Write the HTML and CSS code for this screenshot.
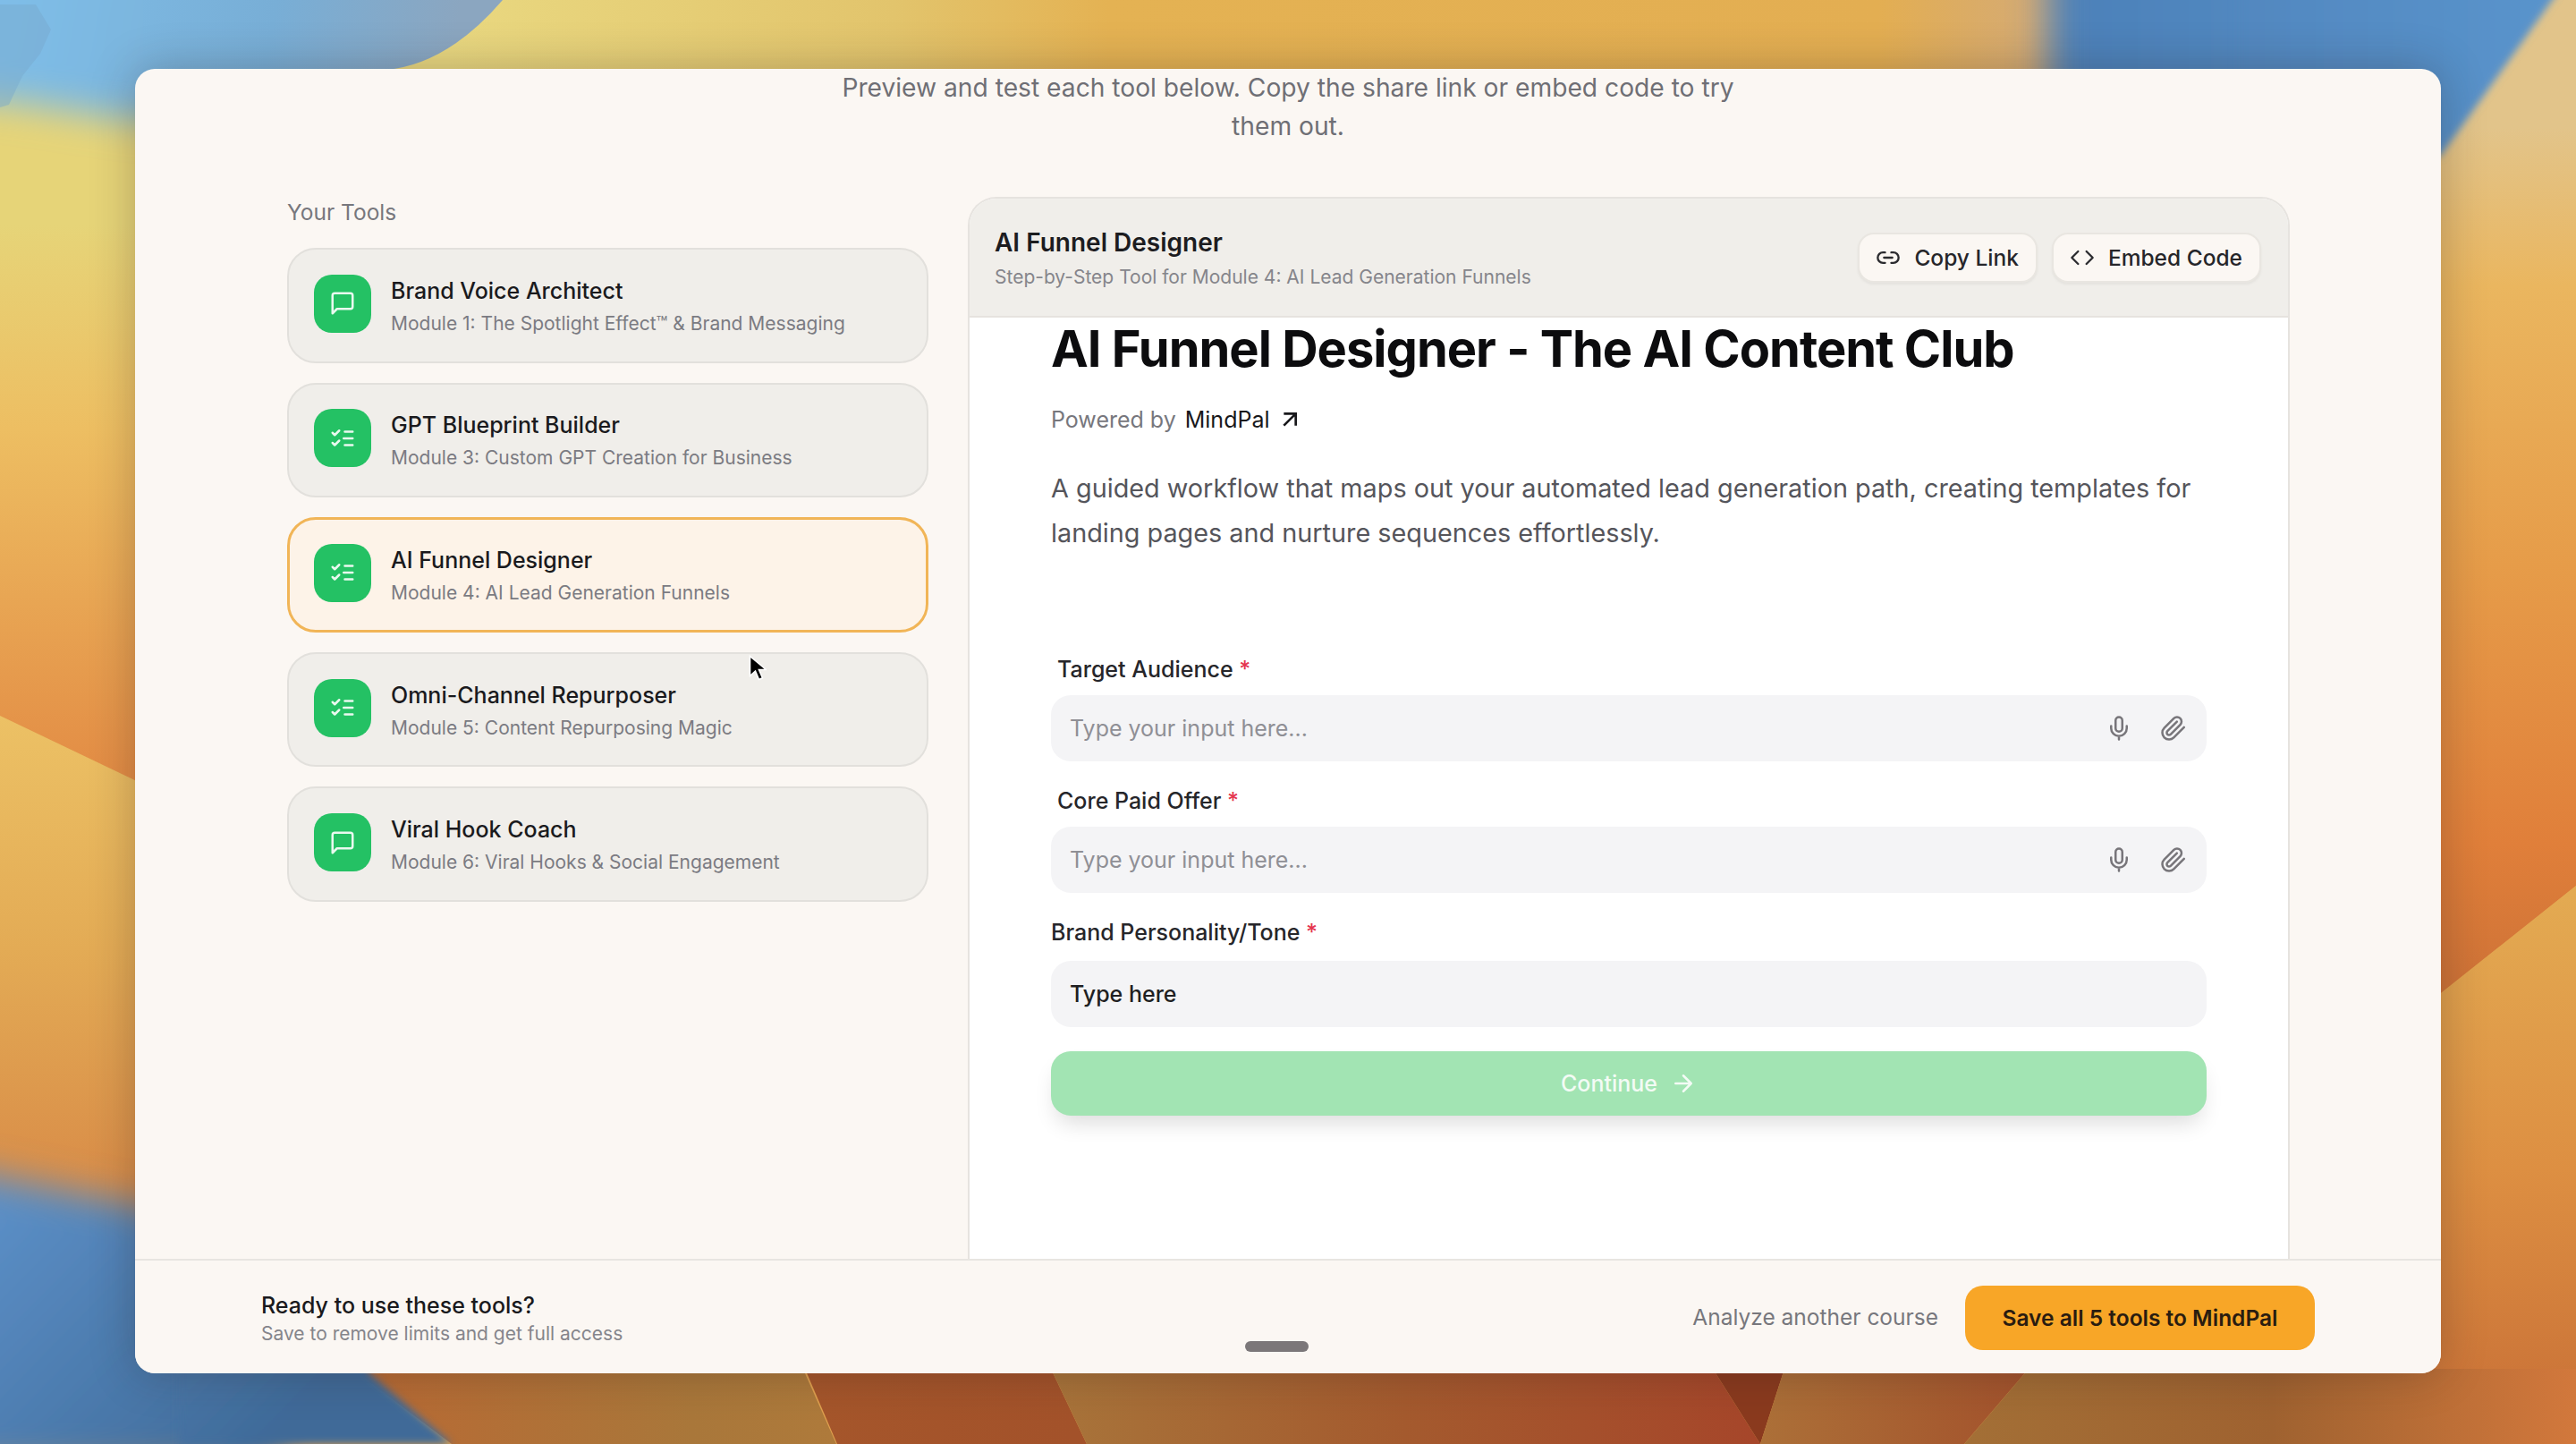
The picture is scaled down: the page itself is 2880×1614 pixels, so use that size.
FILE: index.html
```html
<!DOCTYPE html>
<html lang="en">
<head>
	<meta charset="UTF-8">
	<title>Your Tools</title>
	<link rel="stylesheet" href="styles.css">
</head>
<body>
	<!-- desktop wallpaper -->
	<svg class="wallpaper" viewBox="0 0 2880 1614" width="2880" height="1614" aria-hidden="true">
		<defs>
			<filter id="blur20" x="-20%" y="-40%" width="140%" height="180%"><feGaussianBlur stdDeviation="20"/></filter>
			<filter id="blur4" x="-20%" y="-20%" width="140%" height="140%"><feGaussianBlur stdDeviation="4"/></filter>
			<linearGradient id="topBand" gradientUnits="userSpaceOnUse" x1="400" y1="0" x2="2400" y2="0">
				<stop offset="0.05" stop-color="#e9d880"/>
				<stop offset="0.3" stop-color="#e2c46c"/>
				<stop offset="0.42" stop-color="#e4b253"/>
				<stop offset="0.85" stop-color="#e3ae52"/>
				<stop offset="0.95" stop-color="#d3aa78"/>
			</linearGradient>
			<linearGradient id="leftUpper" gradientUnits="userSpaceOnUse" x1="0" y1="100" x2="0" y2="860">
				<stop offset="0.2" stop-color="#e6d478"/>
				<stop offset="0.5" stop-color="#edbe62"/>
				<stop offset="1" stop-color="#e38d45"/>
			</linearGradient>
			<linearGradient id="leftLower" gradientUnits="userSpaceOnUse" x1="0" y1="800" x2="0" y2="1320">
				<stop offset="0" stop-color="#ecc165"/>
				<stop offset="0.5" stop-color="#e3ab55"/>
				<stop offset="1" stop-color="#d98d48"/>
			</linearGradient>
			<linearGradient id="rightUpper" gradientUnits="userSpaceOnUse" x1="0" y1="60" x2="0" y2="1100">
				<stop offset="0.08" stop-color="#e2c48a"/>
				<stop offset="0.25" stop-color="#eab65f"/>
				<stop offset="0.55" stop-color="#e69c49"/>
				<stop offset="0.85" stop-color="#e07f3a"/>
				<stop offset="1" stop-color="#cf7337"/>
			</linearGradient>
			<linearGradient id="rightLower" gradientUnits="userSpaceOnUse" x1="0" y1="1000" x2="0" y2="1614">
				<stop offset="0" stop-color="#e3aa52"/>
				<stop offset="0.5" stop-color="#dd8f42"/>
				<stop offset="1" stop-color="#c76e36"/>
			</linearGradient>
			<linearGradient id="skyLeft" gradientUnits="userSpaceOnUse" x1="0" y1="0" x2="500" y2="90">
				<stop offset="0" stop-color="#7fbee8"/>
				<stop offset="0.6" stop-color="#78aed6"/>
				<stop offset="1" stop-color="#8ba6c0"/>
			</linearGradient>
			<linearGradient id="skyRight" gradientUnits="userSpaceOnUse" x1="2290" y1="0" x2="2860" y2="0">
				<stop offset="0" stop-color="#4c80b8"/>
				<stop offset="1" stop-color="#5a94cc"/>
			</linearGradient>
			<linearGradient id="seaLeft" gradientUnits="userSpaceOnUse" x1="0" y1="1320" x2="300" y2="1614">
				<stop offset="0" stop-color="#5c90c8"/>
				<stop offset="1" stop-color="#3f6a98"/>
			</linearGradient>
			<linearGradient id="floorA" gradientUnits="userSpaceOnUse" x1="410" y1="0" x2="930" y2="0">
				<stop offset="0" stop-color="#b86a34"/>
				<stop offset="0.7" stop-color="#a9773a"/>
				<stop offset="1" stop-color="#ae7a3b"/>
			</linearGradient>
			<linearGradient id="floorB" gradientUnits="userSpaceOnUse" x1="900" y1="0" x2="1200" y2="0">
				<stop offset="0" stop-color="#a5562b"/>
				<stop offset="1" stop-color="#a3522a"/>
			</linearGradient>
			<linearGradient id="floorC" gradientUnits="userSpaceOnUse" x1="1175" y1="0" x2="1965" y2="0">
				<stop offset="0" stop-color="#a8743a"/>
				<stop offset="0.5" stop-color="#a45a2e"/>
				<stop offset="1" stop-color="#a6462a"/>
			</linearGradient>
			<linearGradient id="floorD" gradientUnits="userSpaceOnUse" x1="1965" y1="0" x2="2268" y2="0">
				<stop offset="0" stop-color="#ac7038"/>
				<stop offset="1" stop-color="#a3522c"/>
			</linearGradient>
			<linearGradient id="floorE" gradientUnits="userSpaceOnUse" x1="2200" y1="0" x2="2880" y2="0">
				<stop offset="0" stop-color="#a36f36"/>
				<stop offset="0.5" stop-color="#9f6230"/>
				<stop offset="1" stop-color="#d2783c"/>
			</linearGradient>
		</defs>
		<rect width="2880" height="1614" fill="#e0a04e"/>
		<rect x="400" y="0" width="2000" height="200" fill="url(#topBand)"/>
		<polygon points="0,0 420,0 420,1001 0,800" fill="url(#leftUpper)"/>
		<polygon points="0,800 420,1001 420,1500 0,1500" fill="url(#leftLower)"/>
		<polygon points="2400,0 2880,0 2880,990 2400,1372" fill="url(#rightUpper)"/>
		<polygon points="2400,1372 2880,990 2880,1614 2400,1614" fill="url(#rightLower)"/>
		<polygon points="-80,-80 380,-80 380,140 151,135 0,112 -80,112" fill="url(#skyLeft)" filter="url(#blur20)"/>
		<path d="M160,0 L562,0 Q500,72 432,78 L160,80 Z" fill="url(#skyLeft)"/>
		<path d="M0,5 L40,5 L57,33 L45,60 L25,85 L10,117 L0,120 Z" fill="#77a8cc" opacity="0.45"/>
		<polygon points="2290,-80 2620,-80 2620,175 2290,175" fill="url(#skyRight)" filter="url(#blur20)"/>
		<polygon points="2500,-30 2875,-30 2728,175 2500,175" fill="url(#skyRight)" filter="url(#blur4)"/>
		<polygon points="400,1535 900,1535 935,1614 505,1614" fill="url(#floorA)"/>
		<polygon points="-80,1300 170,1350 320,1440 320,1640 -80,1640" fill="url(#seaLeft)" filter="url(#blur20)"/>
		<polygon points="200,1500 400,1500 413,1535 505,1614 200,1614" fill="url(#seaLeft)" filter="url(#blur4)"/>
		<polygon points="900,1530 1175,1530 1215,1614 936,1614" fill="url(#floorB)"/>
		<polygon points="1175,1530 1915,1530 1968,1614 1215,1614" fill="url(#floorC)"/>
		<polygon points="1915,1530 1995,1530 1968,1614" fill="#8a3a1e"/>
		<polygon points="1995,1530 2268,1530 2196,1614 1968,1614" fill="url(#floorD)"/>
		<polygon points="2268,1530 2880,1530 2880,1614 2196,1614" fill="url(#floorE)"/>
	</svg>

	<div class="window">
		<p class="intro">Preview and test each tool below. Copy the share link or embed code to try them out.</p>

		<div class="columns">
			<aside class="sidebar">
				<div class="sidebar-label">Your Tools</div>
				<div class="tool-list">
					<div class="tool">
						<span class="tool-icon"><svg viewBox="0 0 24 24"><path d="M21 15a2 2 0 0 1-2 2H7l-4 4V5a2 2 0 0 1 2-2h14a2 2 0 0 1 2 2z"/></svg></span>
						<div class="tool-text">
							<div class="tool-name">Brand Voice Architect</div>
							<div class="tool-module">Module 1: The Spotlight Effect™ &amp; Brand Messaging</div>
						</div>
					</div>
					<div class="tool">
						<span class="tool-icon"><svg viewBox="0 0 24 24"><path d="m3 7 2 2 4-4M3 16l2 2 4-4M14 6h7M13 12h8M14 18h7"/></svg></span>
						<div class="tool-text">
							<div class="tool-name">GPT Blueprint Builder</div>
							<div class="tool-module">Module 3: Custom GPT Creation for Business</div>
						</div>
					</div>
					<div class="tool tool-active">
						<span class="tool-icon"><svg viewBox="0 0 24 24"><path d="m3 7 2 2 4-4M3 16l2 2 4-4M14 6h7M13 12h8M14 18h7"/></svg></span>
						<div class="tool-text">
							<div class="tool-name">AI Funnel Designer</div>
							<div class="tool-module">Module 4: AI Lead Generation Funnels</div>
						</div>
					</div>
					<div class="tool">
						<span class="tool-icon"><svg viewBox="0 0 24 24"><path d="m3 7 2 2 4-4M3 16l2 2 4-4M14 6h7M13 12h8M14 18h7"/></svg></span>
						<div class="tool-text">
							<div class="tool-name">Omni-Channel Repurposer</div>
							<div class="tool-module">Module 5: Content Repurposing Magic</div>
						</div>
					</div>
					<div class="tool">
						<span class="tool-icon"><svg viewBox="0 0 24 24"><path d="M21 15a2 2 0 0 1-2 2H7l-4 4V5a2 2 0 0 1 2-2h14a2 2 0 0 1 2 2z"/></svg></span>
						<div class="tool-text">
							<div class="tool-name">Viral Hook Coach</div>
							<div class="tool-module">Module 6: Viral Hooks &amp; Social Engagement</div>
						</div>
					</div>
				</div>
			</aside>

			<section class="preview">
				<header class="preview-head">
					<div>
						<div class="preview-title">AI Funnel Designer</div>
						<div class="preview-sub">Step-by-Step Tool for Module 4: AI Lead Generation Funnels</div>
					</div>
					<div class="head-actions">
						<button class="ghost-btn"><svg viewBox="0 0 24 24"><path d="M9 17H7A5 5 0 0 1 7 7h2M15 7h2a5 5 0 1 1 0 10h-2M8 12h8"/></svg>Copy Link</button>
						<button class="ghost-btn"><svg viewBox="0 0 24 24"><path d="m16 18 6-6-6-6M8 6l-6 6 6 6"/></svg>Embed Code</button>
					</div>
				</header>

				<div class="preview-body">
					<h1 class="form-title">AI Funnel Designer - The AI Content Club</h1>
					<div class="powered">Powered by <a class="powered-link">MindPal<svg viewBox="0 0 24 24"><path d="M7 17 17 7M7 7h10v10"/></svg></a></div>
					<p class="form-desc">A guided workflow that maps out your automated lead generation path, creating templates for landing pages and nurture sequences effortlessly.</p>

					<div class="field field-first">
						<label class="field-label field-label-inset">Target Audience <span class="req">*</span></label>
						<div class="input">
							<span class="placeholder">Type your input here...</span>
							<svg viewBox="0 0 24 24"><path d="M12 2a3 3 0 0 0-3 3v7a3 3 0 0 0 6 0V5a3 3 0 0 0-3-3ZM19 10v2a7 7 0 0 1-14 0v-2M12 19v3"/></svg>
							<svg viewBox="0 0 24 24"><path d="m21.44 11.05-9.19 9.19a6 6 0 0 1-8.49-8.49l8.57-8.57A4 4 0 1 1 18 8.84l-8.59 8.57a2 2 0 0 1-2.83-2.83l8.49-8.48"/></svg>
						</div>
					</div>
					<div class="field">
						<label class="field-label field-label-inset">Core Paid Offer <span class="req">*</span></label>
						<div class="input">
							<span class="placeholder">Type your input here...</span>
							<svg viewBox="0 0 24 24"><path d="M12 2a3 3 0 0 0-3 3v7a3 3 0 0 0 6 0V5a3 3 0 0 0-3-3ZM19 10v2a7 7 0 0 1-14 0v-2M12 19v3"/></svg>
							<svg viewBox="0 0 24 24"><path d="m21.44 11.05-9.19 9.19a6 6 0 0 1-8.49-8.49l8.57-8.57A4 4 0 1 1 18 8.84l-8.59 8.57a2 2 0 0 1-2.83-2.83l8.49-8.48"/></svg>
						</div>
					</div>
					<div class="field">
						<label class="field-label">Brand Personality/Tone <span class="req">*</span></label>
						<div class="input input-select">Type here</div>
					</div>
					<button class="continue">Continue<svg viewBox="0 0 24 24"><path d="M5 12h14M12 5l7 7-7 7"/></svg></button>
				</div>
			</section>
		</div>

		<footer class="footer">
			<div>
				<div class="footer-title">Ready to use these tools?</div>
				<div class="footer-sub">Save to remove limits and get full access</div>
			</div>
			<div class="footer-actions">
				<a class="footer-link">Analyze another course</a>
				<button class="save-btn">Save all 5 tools to MindPal</button>
			</div>
		</footer>

		<div class="drag-handle"></div>
		<svg class="cursor" viewBox="0 0 20 30" width="20" height="30"><path d="M1.5 1.5v22l6-5.5 4 9.5 4-1.7-4-9.3h8z" fill="#000" stroke="#fff" stroke-width="1.6"/></svg>
	</div>
</body>
</html>
```

FILE: styles.css
```css
/*css reset*/
html,body,div,p,h1,ul,li{
	margin: 0;
	padding: 0;
}
html,body{
	width: 2880px;
	height: 1614px;
	overflow: hidden;
}
body{
	box-sizing: border-box;
	padding: 77px 151px 79px;
	position: relative;
	font-family: Inter, "Liberation Sans", sans-serif;
	color: #18181b;
	background: #e0a04e;
}
button{
	font-family: inherit;
	cursor: pointer;
}

.wallpaper{
	position: absolute;
	top: 0;
	left: 0;
}

/*window*/
.window{
	position: relative;
	height: 100%;
	display: flex;
	flex-direction: column;
	background: #fbf7f3;
	border-radius: 22px;
	box-shadow: 0 0 50px rgba(40,30,30,.28);
	overflow: hidden;
}
.intro{
	width: 1020px;
	margin: 0 auto 57px;
	font-size: 28.2px;
	line-height: 43px;
	text-align: center;
	color: #6f6f75;
}
.columns{
	flex: 1;
	min-height: 0;
	display: flex;
	gap: 44px;
	padding: 0 169px 0 170px;
}

/*sidebar*/
.sidebar{
	width: 717px;
	flex-shrink: 0;
}
.sidebar-label{
	height: 34px;
	margin-bottom: 23px;
	font-size: 24.5px;
	line-height: 34px;
	color: #77777d;
}
.tool-list{
	display: flex;
	flex-direction: column;
	gap: 22px;
}
.tool{
	box-sizing: border-box;
	height: 128.6px;
	display: flex;
	align-items: center;
	gap: 22px;
	padding: 0 28px;
	background: #f0eeea;
	border: 2px solid #e2e0dc;
	border-radius: 32px;
}
.tool-active{
	background: #fdf3e8;
	border: 3px solid #f1b557;
	padding: 0 27px;
}
.tool-icon{
	width: 64px;
	height: 65px;
	margin-bottom: 4px;
	display: flex;
	align-items: center;
	justify-content: center;
	flex-shrink: 0;
	background: #24c164;
	border-radius: 20px;
}
.tool-icon svg{
	width: 30px;
	height: 30px;
	fill: none;
	stroke: #e9f9ef;
	stroke-width: 2;
	stroke-linecap: round;
	stroke-linejoin: round;
}
.tool-text{
	margin-top: 2px;
}
.tool-name{
	font-size: 25px;
	font-weight: 500;
	line-height: 38px;
	color: #1a1a1d;
}
.tool-module{
	font-size: 21px;
	line-height: 35px;
	color: #7b7b82;
}

/*preview panel*/
.preview{
	flex: 1;
	display: flex;
	flex-direction: column;
	background: #fff;
	border: 2px solid #e6e3df;
	border-bottom: 0;
	border-radius: 32px 32px 0 0;
	overflow: hidden;
}
.preview-head{
	box-sizing: border-box;
	height: 133px;
	flex-shrink: 0;
	display: flex;
	align-items: center;
	justify-content: space-between;
	padding: 0 30px 0 28px;
	background: #f0eeea;
	border-bottom: 2px solid #e6e3df;
}
.preview-title{
	margin-top: 4px;
	font-size: 28px;
	font-weight: 600;
	line-height: 40px;
	color: #1c1c1f;
}
.preview-sub{
	margin-top: 1px;
	font-size: 21px;
	line-height: 36px;
	color: #85858b;
}
.head-actions{
	display: flex;
	gap: 16px;
}
.ghost-btn{
	height: 56px;
	display: flex;
	align-items: center;
	gap: 15px;
	padding: 0 19px 0 18px;
	font-size: 24.5px;
	font-weight: 500;
	color: #26262a;
	background: #fbf7f3;
	border: 2px solid #e9e6e1;
	border-radius: 18px;
	box-shadow: 0 2px 3px rgba(0,0,0,.05);
}
.ghost-btn svg{
	width: 28px;
	height: 28px;
	fill: none;
	stroke: #2b2b2f;
	stroke-width: 2;
	stroke-linecap: round;
	stroke-linejoin: round;
}

/*form*/
.preview-body{
	padding: 0 91px;
}
.form-title{
	font-size: 56px;
	font-weight: 700;
	line-height: 70px;
	color: #0c0c0e;
	letter-spacing: -1px;
}
.powered{
	margin-top: 27px;
	display: flex;
	gap: 10px;
	font-size: 25px;
	line-height: 34px;
	color: #77777d;
}
.powered-link{
	display: flex;
	align-items: center;
	gap: 6px;
	color: #18181b;
}
.powered-link svg{
	width: 32px;
	height: 32px;
	fill: none;
	stroke: #18181b;
	stroke-width: 2;
}
.form-desc{
	margin-top: 35px;
	font-size: 28.8px;
	line-height: 50px;
	color: #55555b;
}
.field{
	margin-top: 27px;
}
.field-first{
	margin-top: 110px;
}
.field-label{
	display: block;
	font-size: 25px;
	font-weight: 500;
	line-height: 34px;
	color: #26262a;
}
.field-label-inset{
	padding-left: 7px;
}
.req{
	color: #e5354f;
}
.input{
	box-sizing: border-box;
	height: 74px;
	margin-top: 12px;
	display: flex;
	align-items: center;
	gap: 31px;
	padding: 0 22px 0 21px;
	background: #f4f4f6;
	border-radius: 22px;
}
.input svg{
	width: 30px;
	height: 30px;
	fill: none;
	stroke: #77757a;
	stroke-width: 2;
	stroke-linecap: round;
	stroke-linejoin: round;
}
.placeholder{
	flex: 1;
	font-size: 25px;
	color: #8f8f95;
}
.input-select{
	margin-top: 15px;
	font-size: 25px;
	font-weight: 500;
	color: #1f1f22;
}
.continue{
	width: 100%;
	height: 72px;
	margin-top: 27px;
	display: flex;
	align-items: center;
	justify-content: center;
	gap: 14px;
	font-size: 25px;
	font-weight: 500;
	color: #f3fbf5;
	background: #a2e4b3;
	border: 0;
	border-radius: 22px;
	box-shadow: 0 14px 24px -6px rgba(0,0,0,.14);
}
.continue svg{
	width: 30px;
	height: 30px;
	fill: none;
	stroke: #f3fbf5;
	stroke-width: 2;
	stroke-linecap: round;
	stroke-linejoin: round;
}

/*footer*/
.footer{
	box-sizing: border-box;
	height: 128px;
	flex-shrink: 0;
	display: flex;
	align-items: center;
	justify-content: space-between;
	padding: 0 141px;
	background: #fbf7f3;
	border-top: 2px solid #e8e5e1;
}
.footer-title{
	margin-top: 3px;
	font-size: 25px;
	font-weight: 500;
	line-height: 34px;
	color: #1a1a1d;
}
.footer-sub{
	font-size: 21px;
	line-height: 30px;
	color: #85858b;
}
.footer-actions{
	display: flex;
	align-items: center;
	gap: 30px;
}
.footer-link{
	font-size: 24.5px;
	color: #77777d;
}
.save-btn{
	width: 391px;
	height: 72px;
	margin-top: 2px;
	font-size: 24.5px;
	font-weight: 600;
	color: #2a1c10;
	background: #f8a627;
	border: 0;
	border-radius: 20px;
}

/*video overlays*/
.drag-handle{
	position: absolute;
	left: 1241px;
	bottom: 24px;
	width: 71px;
	height: 12px;
	background: #7b7779;
	border-radius: 6px;
}
.cursor{
	position: absolute;
	left: 686px;
	top: 655px;
}
```
